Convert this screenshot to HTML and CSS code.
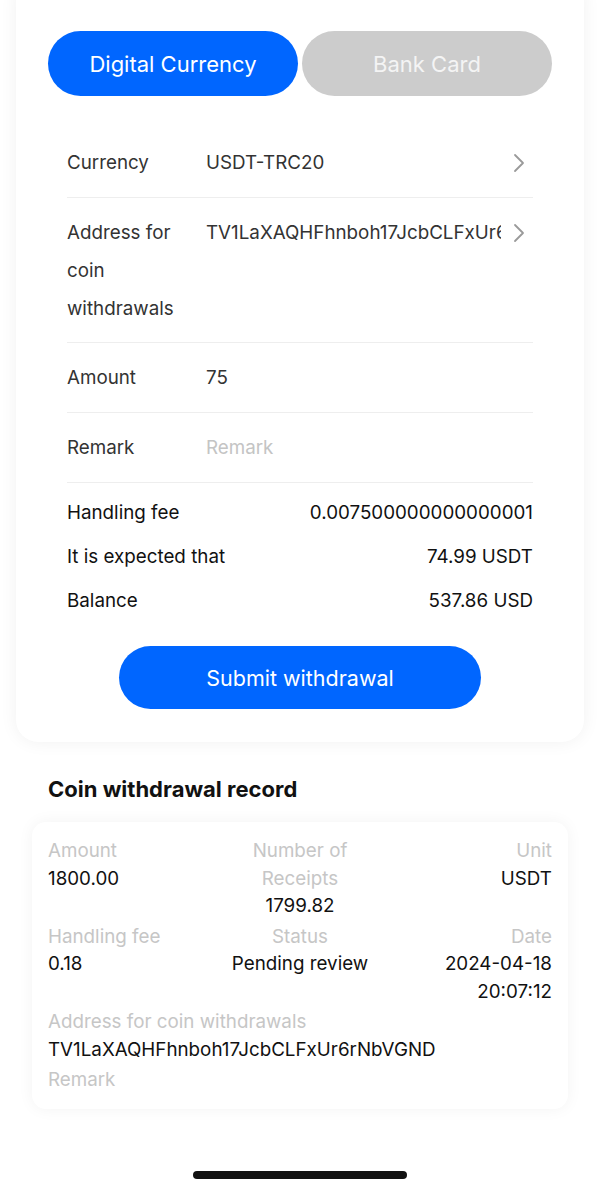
FILE: index.html
```html
<!doctype html>
<html lang="en">
<head>
    <meta charset="utf-8">
    <title>Withdraw</title>
    <link rel="stylesheet" href="styles.css">
</head>
<body>
    <div class="page">
        <div class="card">
            <div class="tabs">
                <div class="tab tab-active">Digital Currency</div>
                <div class="tab">Bank Card</div>
            </div>

            <div class="form">
                <div class="row">
                    <div class="label">Currency</div>
                    <div class="value">USDT-TRC20</div>
                    <svg class="chev" width="12" height="20" viewBox="0 0 12 20"><polyline points="2,2 10,10 2,18" fill="none" stroke="#9a9a9a" stroke-width="1.8" stroke-linecap="round" stroke-linejoin="round"/></svg>
                </div>
                <div class="row row-top">
                    <div class="label">Address for coin withdrawals</div>
                    <div class="value value-clip">TV1LaXAQHFhnboh17JcbCLFxUr6rNbVGND</div>
                    <svg class="chev" width="12" height="20" viewBox="0 0 12 20"><polyline points="2,2 10,10 2,18" fill="none" stroke="#9a9a9a" stroke-width="1.8" stroke-linecap="round" stroke-linejoin="round"/></svg>
                </div>
                <div class="row">
                    <div class="label">Amount</div>
                    <div class="value">75</div>
                </div>
                <div class="row">
                    <div class="label">Remark</div>
                    <div class="value placeholder">Remark</div>
                </div>
            </div>

            <div class="fees">
                <div class="fee"><span>Handling fee</span><span>0.007500000000000001</span></div>
                <div class="fee"><span>It is expected that</span><span>74.99 USDT</span></div>
                <div class="fee"><span>Balance</span><span>537.86 USD</span></div>
            </div>

            <div class="submit">Submit withdrawal</div>
        </div>

        <div class="records">
            <h2 class="records-title">Coin withdrawal record</h2>
            <div class="record">
                <div class="rec-grid">
                    <div class="cell">
                        <div class="rec-label">Amount</div>
                        <div class="rec-value">1800.00</div>
                    </div>
                    <div class="cell cell-mid">
                        <div class="rec-label">Number of Receipts</div>
                        <div class="rec-value">1799.82</div>
                    </div>
                    <div class="cell cell-right">
                        <div class="rec-label">Unit</div>
                        <div class="rec-value">USDT</div>
                    </div>
                    <div class="cell">
                        <div class="rec-label">Handling fee</div>
                        <div class="rec-value">0.18</div>
                    </div>
                    <div class="cell cell-mid">
                        <div class="rec-label">Status</div>
                        <div class="rec-value">Pending review</div>
                    </div>
                    <div class="cell cell-right">
                        <div class="rec-label">Date</div>
                        <div class="rec-value">2024-04-18 20:07:12</div>
                    </div>
                </div>
                <div class="rec-block">
                    <div class="rec-label">Address for coin withdrawals</div>
                    <div class="rec-value">TV1LaXAQHFhnboh17JcbCLFxUr6rNbVGND</div>
                </div>
                <div class="rec-block">
                    <div class="rec-label">Remark</div>
                </div>
            </div>
        </div>

        <div class="home-bar"></div>
    </div>
</body>
</html>
```

FILE: styles.css
```css
body {
    margin: 0;
    background: #ffffff;
    font-family: Inter, "Noto Sans", sans-serif;
    color: #222;
}
.page {
    padding: 0 16px;
    overflow: hidden;
    height: 1189px;
}
.card {
    margin-top: -20px;
    padding: 51px 32px 33px 32px;
    background: #fff;
    border-radius: 22px;
    box-shadow: 0 0 18px rgba(0, 0, 0, 0.06);
}
.tabs {
    display: flex;
    gap: 4px;
}
.tab {
    flex: 1;
    height: 65px;
    border-radius: 33px;
    background: #cccccc;
    color: #f4f4f4;
    font-size: 22px;
    display: flex;
    align-items: center;
    justify-content: center;
}
.tab-active {
    background: #0066ff;
    color: #fff;
}
.form {
    margin: 32px 19px 0 19px;
}
.row {
    display: flex;
    align-items: center;
    padding: 16px 0 15px 0;
    line-height: 38px;
    font-size: 18.8px;
    border-bottom: 1px solid #eeeeee;
}
.row-top {
    align-items: flex-start;
    padding-bottom: 14px;
}
.label {
    width: 128px;
    margin-right: 11px;
    color: #333;
    flex-shrink: 0;
}
.value {
    flex: 1;
    color: #333;
    min-width: 0;
}
.value-clip {
    white-space: nowrap;
    overflow: hidden;
}
.placeholder {
    color: #c4c4c4;
}
.chev {
    margin: 0 8px 0 12px;
    flex-shrink: 0;
}
.row-top .chev {
    margin-top: 9px;
}
.fees {
    margin: 8px 19px 0 19px;
}
.fee {
    display: flex;
    justify-content: space-between;
    line-height: 44px;
    font-size: 18.8px;
    color: #111;
}
.submit {
    width: 362px;
    height: 63px;
    margin: 23px auto 0 auto;
    border-radius: 32px;
    background: #0066ff;
    color: #fff;
    font-size: 21.5px;
    display: flex;
    align-items: center;
    justify-content: center;
}
.records {
    padding: 0 16px;
}
.records-title {
    margin: 33px 0 19px 16px;
    font-size: 22px;
    line-height: 28px;
    font-weight: 700;
    color: #111;
}
.record {
    padding: 15px 16px;
    border-radius: 14px;
    background: #fff;
    box-shadow: 0 0 16px rgba(0, 0, 0, 0.05);
    font-size: 18.8px;
    line-height: 27.5px;
}
.rec-grid {
    display: grid;
    grid-template-columns: 1fr 160px 1fr;
    row-gap: 3px;
}
.cell-mid {
    text-align: center;
}
.cell-right {
    text-align: right;
}
.rec-label {
    color: #c6c6c6;
}
.rec-value {
    color: #111;
}
.rec-block {
    margin-top: 3px;
}
.home-bar {
    width: 214px;
    height: 8px;
    margin: 62px auto 0 auto;
    border-radius: 4px;
    background: #111;
}
```
